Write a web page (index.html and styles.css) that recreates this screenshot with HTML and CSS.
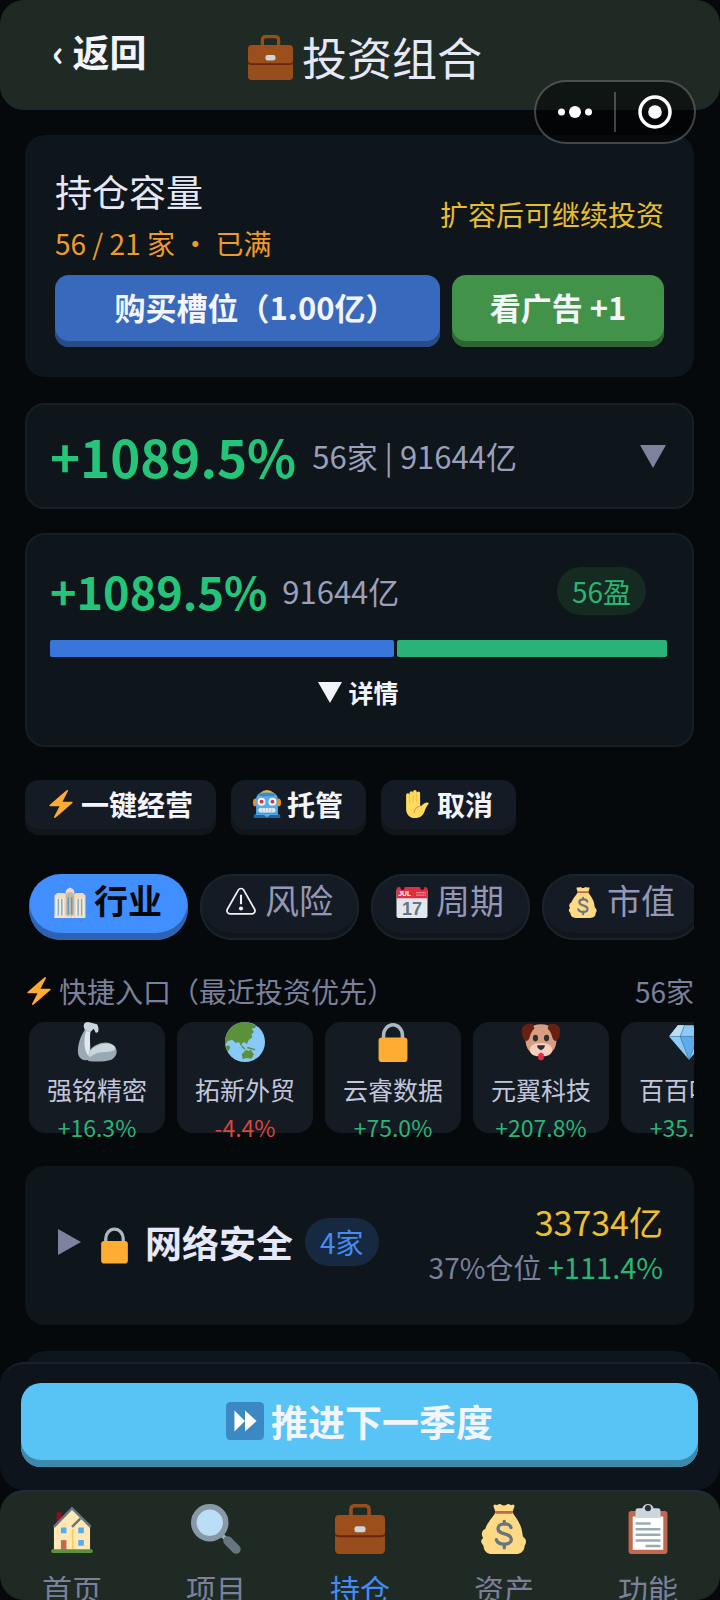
FILE: index.html
```html
<!DOCTYPE html>
<html lang="zh-CN">
<head>
    <meta charset="UTF-8">
    <meta name="viewport" content="width=device-width, initial-scale=1.0">
    <title>投资组合</title>
    <link rel="stylesheet" href="styles.css">
</head>
<body>

<!-- Icons -->
<svg class="sprite" aria-hidden="true">
    <symbol id="i-case" viewBox="0 0 36 36">
        <path d="M11.500 9V4q0-2.700 2.700-2.700h7.600q2.700 0 2.700 2.700v5" fill="none" stroke="#974e1c" stroke-width="2.600"/>
        <rect y="21" width="36" height="15" rx="3" fill="#974e1c"/>
        <path d="M0 19h36v3q0 2-3 2H3q-3 0-3-2z" fill="#6b2410"/>
        <path d="M3 8h30q3 0 3 3v9q0 2.500-3 2.500H3q-3 0-3-2.500v-9q0-3 3-3z" fill="#9c4f1b"/>
        <rect x="14" y="16" width="8" height="4.400" rx="1.800" fill="#ccd6dd"/>
    </symbol>
    <symbol id="i-bolt" viewBox="0 0 36 36">
        <path fill="#ffac33" d="M32.938 15.651C32.792 15.260 32.418 15 32 15H19.925L26.890 1.458c.219-.426.106-.947-.271-1.243C26.437.071 26.218 0 26 0c-.233 0-.466.082-.653.243L18 6.588 3.347 19.243c-.316.273-.430.714-.284 1.105S3.582 21 4 21h12.075L9.110 34.542c-.219.426-.106.947.271 1.243.182.144.401.215.619.215.233 0 .466-.082.653-.243L18 29.412l14.653-12.655c.317-.273.430-.714.285-1.106z"/>
    </symbol>
    <symbol id="i-robot" viewBox="0 0 36 36">
        <ellipse cx="3" cy="16" rx="3" ry="5" fill="#f4900c"/>
        <ellipse cx="33" cy="16" rx="3" ry="5" fill="#f4900c"/>
        <path d="M18 2C8 2 4 7 4 12v18h28V12c0-5-4-10-14-10z" fill="#55acee"/>
        <path d="M7 6q11-5 22 0l-3 2H10z" fill="#3b88c3"/>
        <path d="M9 4q9-8 18 0-9-2-18 0z" fill="#ffac33"/>
        <path d="M1 36v-3q0-2.500 4-2.500h26q4 0 4 2.500v3z" fill="#226699"/>
        <path d="M4 30h28v2H22l-4 3-4-3H4z" fill="#55acee"/>
        <circle cx="11" cy="15" r="5" fill="#f5f8fa"/>
        <circle cx="25" cy="15" r="5" fill="#f5f8fa"/>
        <circle cx="11" cy="15" r="2.500" fill="#dd2e44"/>
        <circle cx="25" cy="15" r="2.500" fill="#dd2e44"/>
        <rect x="7" y="23" width="22" height="6" rx="3" fill="#e1e8ed"/>
        <path d="M12 23v6M16 23v6M20 23v6M24 23v6" stroke="#b5c2cb"/>
    </symbol>
    <symbol id="i-hand" viewBox="0 0 36 36">
        <path fill="#ffdc5d" d="M4 6.500a2.200 2.200 0 0 1 4.400 0V4a2.300 2.300 0 0 1 4.600 0V2.300a2.300 2.300 0 0 1 4.600 0V4a2.200 2.200 0 0 1 4.400 0V20l1.500.5c2-2 4-4 7-4.500 2.500-.3 3.200 1.600 1.700 3-2 2-3.200 5-4.700 9-2 5.500-6 8-12 8C8 36 4 31 4 24z"/>
        <path d="M8.400 7v10M13 5v11M17.600 5v11" fill="none" stroke="#f2b04e" stroke-width="1"/>
        <path d="M23 20.500c-5 .5-8.500 4-8.500 9" fill="none" stroke="#ef9645" stroke-width="1.300"/>
    </symbol>
    <symbol id="i-hall" viewBox="0 0 36 36">
        <path d="M0 36V10l3-3h8l2 1V5l2-3h1l1-1h2l1 1h1l2 3v3l2-1h8l3 3v26z" fill="#efdcc4"/>
        <path d="M13 35V9l3-3h4l3 3v26z" fill="#c5b7a3"/>
        <path d="M4.500 14v19M8.500 14v19M27.500 14v19M31.500 14v19" stroke="#74b0da" stroke-width="1.600"/>
        <path d="M16 12v20M20 12v20" stroke="#5c99c4" stroke-width="1.600"/>
        <path d="M2.500 13v20M6.500 13v20M10.500 13v20M25.500 13v20M29.500 13v20M33.500 13v20" stroke="#fff1dc"/>
        <path d="M0 34.500h36" stroke="#f3e3cd" stroke-width="3" stroke-dasharray="3 1"/>
    </symbol>
    <symbol id="i-warn" viewBox="0 0 36 36">
        <path d="M14.800 3.600a3.700 3.700 0 0 1 6.400 0l12.600 22.200a3.700 3.700 0 0 1-3.200 5.500H5.400a3.700 3.700 0 0 1-3.200-5.500z" fill="none" stroke="#f2f2f4" stroke-width="2"/>
        <path d="M18 9v11" stroke="#f2f2f4" stroke-width="2.400"/>
        <circle cx="18" cy="25" r="2.400" fill="#f2f2f4"/>
    </symbol>
    <symbol id="i-bag" viewBox="0 0 36 36">
        <path fill="#ffd983" d="M12 6l-1.500-4q-.3-2 1.500-1.500 1.500.5 2-.3 1.500-.4 2.500.6 1.500.5 3 0 1-1 2.500-.6.500.8 2 .3 1.800-.5 1.500 1.500L24 6c1 2 4 5 6 10 1.500 4 1 6 2 8 2 1 2.500 4 .8 6 0 4-3 6-6.300 6h-17c-3.500 0-6-2-6.300-6C.6 27 1.500 26 3 24.500 1.200 22 2 19 4.500 18c1-4 6-9 7.500-12z"/>
        <path d="M12.500 6h11" stroke="#be6b4c" stroke-width="2" stroke-linecap="round"/>
        <path d="M23 17c-.7-3.500-9.200-3.800-9.300.8 0 4.700 9.600 2.700 9.600 7.700 0 4.500-9.500 4.500-10.800.3M18.200 12.500v2M18.200 29v2.500" fill="none" stroke="#67757f" stroke-width="2.400" stroke-linecap="round"/>
    </symbol>
    <symbol id="i-arm" viewBox="0 0 36 36">
        <path d="M6 4q0-4 4-4l8 2q2 3 1 7l-2 1-2-4-3 3-4 1z" fill="#ccd6dd"/>
        <path d="M7 7l5 2c-1 6 0 12-1 16l1 9q-9 2-11-5C0 22 3 13 7 7z" fill="#99aab5"/>
        <path d="M8 8l4 1c-1 8 1 16-1 22-5-4-5-15-3-23z" fill="#e1e8ed"/>
        <path d="M11 26c6-8 18-10 23-4 3 4 2 9-3 12-6 2-15 2-21 1z" fill="#99aab5"/>
        <path d="M11 27c6-8 18-10 23-5 2 4-4 5-10 5-5 0-9 2-13 5z" fill="#ccd6dd"/>
    </symbol>
    <symbol id="i-globe" viewBox="0 0 36 36">
        <circle cx="18" cy="18" r="18" fill="#88c9f9"/>
        <path fill="#5c913b" d="M1.500 11C4.500 4 11 0 18 0c4 .3 7 1.500 10 3.500l-1 2-3 .5 2 3-2 2 .5 3-3 2-2 4-2-2-2 1-1 3-2-4-3 1-3-3-4 1-2 3-2-1zM.3 22l3-1 1.500 2-2.300 4zM15 29l4-4 2 1 2-1 3 4-2 4-5-.5-3 1z"/>
        <path d="M15 21.500l3 3M20 23l7 2" stroke="#5c913b" stroke-width="1.300"/>
    </symbol>
    <symbol id="i-lock" viewBox="0 0 36 36">
        <path d="M9.500 18v-6a8.500 9.500 0 0 1 17 0v6" fill="none" stroke="#aab8c2" stroke-width="3.200"/>
        <rect x="5" y="14" width="26" height="22" rx="3" fill="#ffac33"/>
    </symbol>
    <symbol id="i-dog" viewBox="0 0 36 36">
        <path d="M18 2c9 0 14 5 14 13 0 9-4 15-14 15S4 24 4 15C4 7 9 2 18 2z" fill="#d99e82"/>
        <path d="M11 2C6 .5 1 3 .8 7 .5 12 2 17 5 17c4-1 2-7 7-11z" fill="#662113"/>
        <path d="M25 2c5-1.500 10 1 10.200 5 .3 5-1.200 10-4.200 10-4-1-2-7-7-11z" fill="#662113"/>
        <path d="M18 19c7 0 10 3 10 6 0 5-5 6-10 6S8 30 8 25c0-3 3-6 10-6z" fill="#f9cfbe"/>
        <ellipse cx="13" cy="14.500" rx="2.300" ry="3" fill="#292f33"/>
        <ellipse cx="23" cy="14.500" rx="2.300" ry="3" fill="#292f33"/>
        <path d="M14.500 21h7q0 3-3.500 4.500-3.500-1.500-3.500-4.500z" fill="#292f33"/>
        <path d="M15.500 29l2.500-1.500 2.500 1.500v4q-.5 1.500-2.500 1.500t-2.500-1.500z" fill="#dd2e44"/>
    </symbol>
    <symbol id="i-gem" viewBox="0 0 36 36">
        <path d="M8 3h20l8 10-18 21L0 13z" fill="#8ccaf7"/>
        <path d="M8 3h6l-4 10H0z" fill="#bdddf4"/>
        <path d="M10 13h16l-8 21z" fill="#5dadec"/>
        <path d="M0 13h36M14 3l-4 10 8 21 8-21-4-10" fill="none" stroke="#3b6f9c" stroke-width=".6"/>
    </symbol>
    <symbol id="i-next" viewBox="0 0 36 36">
        <rect width="36" height="36" rx="4" fill="#3b88c3"/>
        <path d="M8 8l10 10L8 28zM18 8l11 10-11 10z" fill="#fff"/>
    </symbol>
    <symbol id="i-home" viewBox="0 0 36 36">
        <rect x="7" y="6" width="3.500" height="8" fill="#a0041e"/>
        <path d="M5 34V16L18 4l13 12v18z" fill="#ffe8b6"/>
        <path d="M18.500 18v16" stroke="#ffcc4d" stroke-width="1.200"/>
        <path d="M5 16.500L18 3l13.500 13.500M18 16.500l6-6" fill="none" stroke="#66757f" stroke-width="1.800"/>
        <path d="M10 17h4v4h-4zM22.500 17h4v4h-4zM22.500 26h4v4h-4z" fill="#55acee"/>
        <path d="M10 26h4v7h-4z" fill="#c1694f"/>
        <rect x="3" y="32.500" width="30" height="2.800" rx="1.200" fill="#5c913b"/>
    </symbol>
    <symbol id="i-search" viewBox="0 0 36 36">
        <path d="M21 21l5 5" stroke="#99aab5" stroke-width="3"/>
        <path d="M26.500 26.500l6 6" stroke="#66757f" stroke-width="6.600" stroke-linecap="round"/>
        <circle cx="13.500" cy="13.500" r="11.500" fill="#bbddf5" stroke="#8899a6" stroke-width="4"/>
    </symbol>
    <symbol id="i-list" viewBox="0 0 36 36">
        <rect x="4" y="5" width="28" height="31" rx="2" fill="#c1694f"/>
        <path d="M7 9h22v24H7z" fill="#fff"/>
        <path d="M9 5q0-2 2-2h3q1-3 4-3t4 3h3q2 0 2 2v5H9z" fill="#ccd6dd"/>
        <circle cx="18" cy="3" r="2.200" fill="#292f33"/>
        <path d="M9.800 14h9.400M9.800 18.200h16.400M9.800 22.200h16.400M9.800 26.200h16.400M17 30.200h9.200" stroke="#99aab5" stroke-width="1.800" stroke-linecap="round"/>
    </symbol>
</svg>

<div class="app">
    <header class="header">
        <button type="button" class="back">‹ 返回</button>
        <h1 class="title"><svg class="icon-title"><use href="#i-case"/></svg>投资组合</h1>
    </header>

    <div class="capsule">
        <button type="button" aria-label="更多">
            <svg width="34" height="14" viewBox="0 0 34 14" fill="#fff"><circle cx="3.500" cy="7" r="3.500"/><circle cx="17" cy="7" r="6"/><circle cx="30.500" cy="7" r="3.500"/></svg>
        </button>
        <button type="button" aria-label="关闭">
            <svg width="34" height="34" viewBox="0 0 34 34"><circle cx="17" cy="17" r="15" fill="none" stroke="#fff" stroke-width="3.500"/><circle cx="17" cy="17" r="6.800" fill="#fff"/></svg>
        </button>
    </div>

    <main class="content">
        <section class="card capacity">
            <div class="capacity-head">
                <div>
                    <h2>持仓容量</h2>
                    <p class="full">56 / 21 家 ・ 已满</p>
                </div>
                <p class="hint">扩容后可继续投资</p>
            </div>
            <div class="capacity-buttons">
                <button type="button" class="btn btn-blue">购买槽位（1.00亿）</button>
                <button type="button" class="btn btn-green">看广告 +1</button>
            </div>
        </section>

        <section class="card bordered summary">
            <strong class="gain-big">+1089.5%</strong>
            <span class="muted">56家 | 91644亿</span>
            <svg class="arrow-down" viewBox="0 0 26 24"><path d="M0 1h26L13 24z" fill="#7d829f"/></svg>
        </section>

        <section class="card bordered overview">
            <div class="overview-row">
                <strong class="gain">+1089.5%</strong>
                <span class="muted">91644亿</span>
                <span class="pill pill-green">56盈</span>
            </div>
            <div class="bar">
                <span class="bar-blue" style="flex-grow: 56"></span>
                <span class="bar-green" style="flex-grow: 44"></span>
            </div>
            <button type="button" class="details"><svg class="arrow-small" viewBox="0 0 24 22"><path d="M0 1h24L12 22z" fill="#f4f4fb"/></svg>详情</button>
        </section>

        <div class="chips">
            <button type="button" class="chip"><svg><use href="#i-bolt"/></svg>一键经营</button>
            <button type="button" class="chip"><svg><use href="#i-robot"/></svg>托管</button>
            <button type="button" class="chip"><svg><use href="#i-hand"/></svg>取消</button>
        </div>

        <div class="tabs">
            <button type="button" class="tab active"><svg><use href="#i-hall"/></svg>行业</button>
            <button type="button" class="tab"><svg><use href="#i-warn"/></svg>风险</button>
            <button type="button" class="tab">
                <svg viewBox="0 0 36 36">
                    <rect y="2" width="36" height="34" rx="3" fill="#e1e8ed"/>
                    <path d="M0 13V3q0-3 3-3h30q3 0 3 3v10z" fill="#dd2e44"/>
                    <circle cx="7" cy="1" r="2.500" fill="#141b24"/>
                    <circle cx="30" cy="1" r="2.500" fill="#141b24"/>
                    <path d="M23 6.500h11M23 9.500h11" stroke="#f4abba" stroke-width="1.400" stroke-dasharray="1.500 .9"/>
                    <text class="cal-month" x="2" y="11">JUL</text>
                    <text class="cal-day" x="18" y="32" text-anchor="middle">17</text>
                </svg>周期</button>
            <button type="button" class="tab"><svg><use href="#i-bag"/></svg>市值</button>
        </div>

        <div class="quick-head">
            <svg><use href="#i-bolt"/></svg>
            <span>快捷入口（最近投资优先）</span>
            <span class="quick-count">56家</span>
        </div>
        <div class="quick-list">
            <a href="#" class="quick"><svg><use href="#i-arm"/></svg><span class="name">强铭精密</span><span class="up">+16.3%</span></a>
            <a href="#" class="quick"><svg><use href="#i-globe"/></svg><span class="name">拓新外贸</span><span class="down">-4.4%</span></a>
            <a href="#" class="quick"><svg><use href="#i-lock"/></svg><span class="name">云睿数据</span><span class="up">+75.0%</span></a>
            <a href="#" class="quick"><svg><use href="#i-dog"/></svg><span class="name">元翼科技</span><span class="up">+207.8%</span></a>
            <a href="#" class="quick"><svg><use href="#i-gem"/></svg><span class="name">百百叮咚</span><span class="up">+35.2%</span></a>
        </div>

        <section class="card industry">
            <svg class="arrow-right" viewBox="0 0 23 26"><path d="M0 0l23 13L0 26z" fill="#7d829f"/></svg>
            <svg class="icon-industry"><use href="#i-lock"/></svg>
            <h2>网络安全</h2>
            <span class="pill pill-blue">4家</span>
            <div class="industry-value">
                <p class="amount">33734亿</p>
                <p class="share">37%仓位 <span class="up">+111.4%</span></p>
            </div>
        </section>
        <section class="card industry"></section>
    </main>

    <div class="advance">
        <button type="button" class="btn-next"><svg><use href="#i-next"/></svg>推进下一季度</button>
    </div>

    <nav class="nav">
        <a href="#"><svg><use href="#i-home"/></svg>首页</a>
        <a href="#"><svg><use href="#i-search"/></svg>项目</a>
        <a href="#" class="current"><svg><use href="#i-case"/></svg>持仓</a>
        <a href="#"><svg><use href="#i-bag"/></svg>资产</a>
        <a href="#"><svg><use href="#i-list"/></svg>功能</a>
    </nav>
</div>

</body>
</html>
```
FILE: styles.css
```css
* {
    box-sizing: border-box;
}

body {
    margin: 0;
    background-color: #05090c;
    color: #e6e8f8;
    font-family: "Noto Sans CJK SC", sans-serif;
    font-size: 28px;
    line-height: 40px;
}

h1, h2, p {
    margin: 0;
    font-weight: 400;
}

button {
    border: none;
    padding: 0;
    background: none;
    color: #f4f4fb;
    font-family: inherit;
    font-weight: 700;
    cursor: pointer;
}

a {
    color: inherit;
    text-decoration: none;
}

svg {
    flex-shrink: 0;
}

.sprite {
    position: absolute;
    width: 0;
    height: 0;
}

.app {
    position: relative;
    display: flex;
    flex-direction: column;
    height: 100vh;
    overflow: hidden;
}

/* Header */
.header {
    display: grid;
    grid-template-columns: 1fr auto 1fr;
    align-items: center;
    flex-shrink: 0;
    height: 110px;
    padding: 0 42px 0 52px;
    background-color: #1f2a24;
    border-bottom: 2px solid #1e2830;
    border-radius: 24px;
}

.back {
    justify-self: start;
    padding-bottom: 6px;
    font-size: 37px;
    line-height: 54px;
}

.title {
    display: flex;
    align-items: center;
    gap: 9px;
    padding-top: 6px;
    font-size: 45px;
    line-height: 64px;
}

.icon-title {
    width: 45px;
    height: 45px;
}

.capsule {
    position: absolute;
    top: 80px;
    right: 24px;
    display: flex;
    align-items: center;
    width: 162px;
    height: 64px;
    background-color: rgba(0, 0, 0, 0.5);
    border: 2px solid rgba(255, 255, 255, 0.25);
    border-radius: 32px;
}

.capsule button {
    display: flex;
    flex: 1;
    align-items: center;
    justify-content: center;
    height: 40px;
}

.capsule button + button {
    border-left: 2px solid rgba(255, 255, 255, 0.25);
}

/* Content */
.content {
    flex: 1;
    min-height: 0;
    margin-bottom: -24px;
    padding: 25px 26px 0 25px;
    overflow: hidden;
}

.card {
    margin-bottom: 26px;
    background-color: #0e151b;
    border-radius: 20px;
}

.bordered {
    border: 2px solid #161e27;
    margin-bottom: 24px;
}

.muted {
    color: #9b9fb9;
    font-size: 31px;
}

.up {
    color: #2ab575;
}

.down {
    color: #d9463b;
}

.capacity {
    padding: 29px 30px 30px;
}

.capacity-head {
    display: flex;
    align-items: center;
    justify-content: space-between;
    margin-bottom: 12px;
}

.capacity h2 {
    margin-bottom: 4px;
    font-size: 37px;
    line-height: 55px;
}

.full {
    color: #f09a2a;
}

.hint {
    color: #e8bd2c;
}

.capacity-buttons {
    display: flex;
    gap: 12px;
}

.btn {
    height: 72px;
    padding-bottom: 9px;
    border-radius: 14px;
    font-size: 31px;
}

.btn-blue {
    flex: 369;
    padding-left: 16px;
    background-color: #3869bd;
    box-shadow: inset 0 -6px 0 #294b86;
}

.btn-green {
    flex: 212;
    background-color: #43924a;
    box-shadow: inset 0 -6px 0 #2f6535;
}

.summary {
    display: flex;
    align-items: center;
    gap: 16px;
    height: 106px;
    padding: 0 26px 0 23px;
}

.gain-big {
    color: #24c479;
    font-size: 51px;
    line-height: 72px;
}

.gain {
    color: #24c479;
    font-size: 45px;
}

.arrow-down {
    width: 26px;
    height: 24px;
    margin-left: auto;
}

.overview {
    padding: 31px 25px 35px 23px;
    margin-bottom: 33px;
}

.overview-row {
    display: flex;
    align-items: center;
    gap: 15px;
    height: 49px;
}

.pill {
    padding: 4px 15px;
    border-radius: 24px;
}

.pill-green {
    margin-left: auto;
    margin-right: 21px;
    background-color: #152a20;
    color: #2ab575;
}

.pill-blue {
    background-color: #172940;
    color: #448cf5;
}

.bar {
    display: flex;
    gap: 3px;
    height: 17px;
    margin-top: 25px;
}

.bar span {
    flex-basis: 0;
    border-radius: 2px;
}

.bar-blue {
    background-color: #3876dc;
}

.bar-green {
    background-color: #2ab378;
}

.details {
    display: flex;
    align-items: center;
    justify-content: center;
    gap: 6px;
    width: 100%;
    margin-top: 17px;
    font-size: 25px;
    line-height: 36px;
}

.arrow-small {
    width: 24px;
    height: 22px;
}

/* Actions */
.chips {
    display: flex;
    gap: 15px;
    margin-bottom: 39px;
}

.chip {
    display: flex;
    align-items: center;
    gap: 6px;
    height: 55px;
    padding: 0 23px 8px 22px;
    background-color: #141b24;
    box-shadow: inset 0 -6px 0 #10161a;
    border-radius: 14px;
    font-size: 28px;
}

.chip svg,
.quick-head svg {
    width: 28px;
    height: 28px;
}

.tabs {
    display: flex;
    gap: 12px;
    margin-bottom: 31px;
    padding-left: 4px;
    overflow: hidden;
}

.tab {
    display: flex;
    flex-shrink: 0;
    align-items: center;
    gap: 8px;
    height: 66px;
    padding: 0 26px 15px 25px;
    background-color: #141b24;
    box-shadow: inset 0 0 0 2px #1a222b, inset 0 -7px 0 #10161a;
    border-radius: 32px;
    color: #9498b4;
    font-size: 34px;
    font-weight: 400;
}

.tab svg {
    width: 32px;
    height: 31px;
    margin-top: 6px;
}

.tab.active {
    background-color: #418eff;
    box-shadow: inset 0 -7px 0 #2d63b3;
    color: #05090c;
    font-weight: 700;
}

.cal-month {
    fill: #fff;
    font-family: "Liberation Sans", sans-serif;
    font-size: 8px;
    font-weight: 700;
}

.cal-day {
    fill: #66757f;
    font-family: "Liberation Sans", sans-serif;
    font-size: 21px;
    font-weight: 700;
}

/* Quick entries */
.quick-head {
    display: flex;
    align-items: center;
    gap: 6px;
    color: #7b809b;
}

.quick-count {
    margin-left: auto;
}

.quick-list {
    display: flex;
    gap: 12px;
    margin-bottom: 22px;
    padding: 11px 0 11px 4px;
    overflow: hidden;
}

.quick {
    display: flex;
    flex-direction: column;
    flex-shrink: 0;
    align-items: center;
    width: 136px;
    height: 111px;
    background-color: #141b22;
    border-radius: 16px;
    font-size: 23px;
    line-height: 32px;
}

.quick svg {
    width: 40px;
    height: 40px;
}

.quick .name {
    margin: 10px 0 5px;
    color: #c2c6dc;
    font-size: 25px;
    line-height: 34px;
}

/* Industries */
.industry {
    display: flex;
    align-items: center;
    height: 159px;
    padding: 31px 31px 38px 33px;
}

.industry h2 {
    margin: 0 12px;
    font-size: 37px;
    font-weight: 700;
    line-height: 54px;
}

.arrow-right {
    width: 23px;
    height: 26px;
    margin-right: 15px;
}

.icon-industry {
    width: 37px;
    height: 38px;
    margin-top: 6px;
}

.industry-value {
    margin-left: auto;
    text-align: right;
}

.amount {
    color: #f0c02c;
    font-size: 34px;
    line-height: 48px;
}

.share {
    color: #7b809b;
}

.share .up {
    font-size: 29px;
}

/* Bottom */
.advance {
    position: relative;
    flex-shrink: 0;
    padding: 19px 22px 23px 21px;
    background-color: #0d141b;
    border-top: 2px solid #18212b;
    border-radius: 24px;
}

.btn-next {
    display: flex;
    align-items: center;
    justify-content: center;
    gap: 7px;
    width: 100%;
    height: 84px;
    padding-bottom: 8px;
    background-color: #58c3f5;
    box-shadow: inset 0 -7px 0 #3d89ac;
    border-radius: 20px;
    font-size: 37px;
}

.btn-next svg {
    width: 38px;
    height: 38px;
}

.nav {
    display: flex;
    flex-shrink: 0;
    height: 110px;
    background-color: #1f2a24;
    border-top: 2px solid #222d33;
    border-radius: 24px;
    overflow: hidden;
}

.nav a {
    display: flex;
    flex: 1;
    flex-direction: column;
    align-items: center;
    gap: 14px;
    padding-top: 12px;
    color: #7b809b;
    font-size: 30px;
}

.nav svg {
    width: 50px;
    height: 50px;
}

.nav .current {
    color: #448cf5;
}
```
